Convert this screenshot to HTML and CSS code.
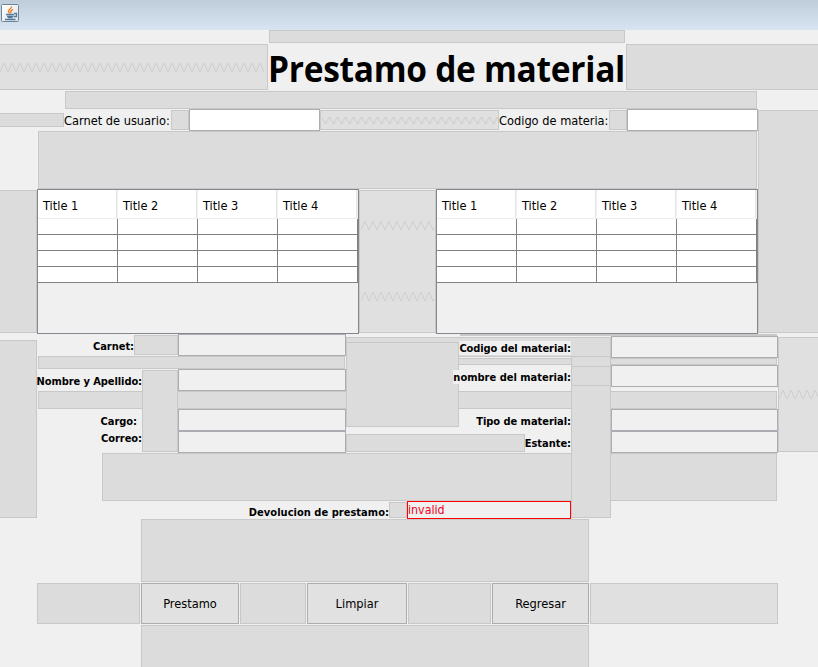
FILE: index.html
```html
<!DOCTYPE html>
<html lang="es">
<head>
<meta charset="utf-8">
<title>Prestamo de material</title>
<link rel="stylesheet" href="styles.css">
</head>
<body>
<div class="window">
  <header class="titlebar">
    <svg class="java" width="18" height="18" viewBox="0 0 18 18">
      <defs>
        <linearGradient id="tile" x1="0" y1="0" x2="1" y2="1"><stop offset="0" stop-color="#fff"/><stop offset="1" stop-color="#dce3ea"/></linearGradient>
        <pattern id="zig" width="8" height="9" patternUnits="userSpaceOnUse"><path d="M0 9L4 0L8 9" fill="none" stroke="#cdcdcd" stroke-width="1"/></pattern>
        <pattern id="zig-low" x="-4.5" width="8" height="7" patternUnits="userSpaceOnUse"><path d="M0 7L4 0L8 7" fill="none" stroke="#cacaca" stroke-width="1"/></pattern>
      </defs>
      <rect x=".5" y=".5" width="17" height="17" rx="1" fill="url(#tile)" stroke="#6c8398"/>
      <path d="M10.500 2.500C11 4.500 7 5.500 7.500 7.500C7.700 8.500 9 8.500 9 9.500M12 5.500C9.500 6.500 9.500 7.500 10.500 8.500" fill="none" stroke="#ef8020" stroke-width="1.500"/>
      <path d="M5 10.500H13M6 12.500H12.500M7 13.500H11.500M13 9.500H15.500V12.500H13M4 15.500H14.500" fill="none" stroke="#52789b" stroke-width="1.300"/>
    </svg>
  </header>

  <div class="gap gap-top"></div>
  <div class="heading">
    <div class="gap flex heading-left"><svg class="zig" width="264" height="9"><rect width="264" height="9" fill="url(#zig)"/></svg></div>
    <h1><span>Prestamo de material</span></h1>
    <div class="gap heading-right"></div>
  </div>

  <div class="upper">
    <div class="upper-main">
      <div class="gap gap-heading"></div>
      <div class="search">
        <div class="gap search-lead"></div>
        <label class="label-user">Carnet de usuario:</label>
        <div class="gap search-gap"></div>
        <div class="field search-field"></div>
        <div class="gap flex search-mid"><svg class="zig" width="176" height="7"><rect width="176" height="7" fill="url(#zig-low)"/></svg></div>
        <label class="label-code">Codigo de materia:</label>
        <div class="gap search-gap"></div>
        <div class="field search-field"></div>
      </div>
      <div class="gap gap-search"></div>
      <div class="tables">
        <div class="gap tables-lead"></div>
        <div class="scroll">
          <table>
            <thead><tr><th>Title 1</th><th>Title 2</th><th>Title 3</th><th>Title 4</th></tr></thead>
            <tbody>
              <tr><td></td><td></td><td></td><td></td></tr>
              <tr><td></td><td></td><td></td><td></td></tr>
              <tr><td></td><td></td><td></td><td></td></tr>
              <tr><td></td><td></td><td></td><td></td></tr>
            </tbody>
          </table>
        </div>
        <div class="gap flex tables-mid">
          <svg class="zig" width="73" height="9"><rect width="73" height="9" fill="url(#zig)"/></svg>
          <svg class="zig" width="73" height="9"><rect width="73" height="9" fill="url(#zig)"/></svg>
        </div>
        <div class="scroll">
          <table>
            <thead><tr><th>Title 1</th><th>Title 2</th><th>Title 3</th><th>Title 4</th></tr></thead>
            <tbody>
              <tr><td></td><td></td><td></td><td></td></tr>
              <tr><td></td><td></td><td></td><td></td></tr>
              <tr><td></td><td></td><td></td><td></td></tr>
              <tr><td></td><td></td><td></td><td></td></tr>
            </tbody>
          </table>
        </div>
      </div>
    </div>
    <div class="gap upper-side"></div>
  </div>

  <div class="form">
    <div class="gap g-left"></div>
    <div class="gap g-row2"></div>
    <div class="gap g-row3"></div>
    <div class="gap g-bottom"></div>
    <div class="gap g-thin"></div>
    <div class="g-line"></div>
    <div class="gap g-carnet"></div>
    <div class="gap g-labels"></div>
    <div class="gap g-code"></div>
    <div class="gap g-center"></div>
    <div class="gap g-shelf"></div>
    <div class="gap g-column"></div>
    <div class="gap g-column-mid"></div>
    <div class="gap flex g-right"><svg class="zig" width="40" height="9"><rect width="40" height="9" fill="url(#zig)"/></svg></div>
    <div class="gap g-return"></div>

    <label class="l-carnet">Carnet:</label>
    <label class="l-name">Nombre y Apellido:</label>
    <label class="l-cargo">Cargo:</label>
    <label class="l-mail">Correo:</label>
    <label class="l-code">Codigo del material:</label>
    <label class="l-matname">nombre del material:</label>
    <label class="l-type">Tipo de material:</label>
    <label class="l-shelf">Estante:</label>
    <label class="l-return">Devolucion de prestamo:</label>

    <div class="field f-carnet"></div>
    <div class="field f-name"></div>
    <div class="field f-cargo"></div>
    <div class="field f-mail"></div>
    <div class="field f-code"></div>
    <div class="field f-matname"></div>
    <div class="field f-type"></div>
    <div class="field f-shelf"></div>
    <div class="invalid">invalid</div>
  </div>

  <div class="gap actions-gap"></div>
  <div class="actions">
    <div class="gap"></div>
    <button><span>Prestamo</span></button>
    <div class="gap"></div>
    <button><span>Limpiar</span></button>
    <div class="gap"></div>
    <button><span>Regresar</span></button>
    <div class="gap flex"></div>
  </div>
  <div class="gap actions-gap last"></div>
</div>
</body>
</html>
```
FILE: styles.css
```css
* { box-sizing: border-box; }
body {
  margin: 0;
  background: #f0f0f0;
  color: #000;
  font: 12.7px/14px "DejaVu Sans Condensed", "DejaVu Sans", sans-serif;
}
.window { width: 818px; height: 667px; overflow: hidden; }
.titlebar {
  height: 30px;
  padding: 4px 1px;
  background: linear-gradient(#bfcddb, #d7e5f2);
}
svg { display: block; }
.gap { border: 1px solid #c8c8c8; background: #dcdcdc; }
.gap.flex { background: #e0e0e0; }
.field { border: 1px solid #abadb3; background: #f0f0f0; height: 22px; }
label { white-space: nowrap; }

/* heading */
.gap-top { width: 356px; height: 13px; margin-left: 269px; }
.heading { display: flex; height: 46px; margin: 1px 0; }
.heading-left { width: 268px; border-left: 0; padding-top: 18px; }
.heading-right { flex: 1; border-right: 0; }
h1 {
  width: 358px;
  margin: 0;
  font: 700 36px/46px "Open Sans", sans-serif;
  letter-spacing: -.3px;
  white-space: nowrap;
  padding-top: 2px;
}
h1 span { display: inline-block; transform: scaleX(.93); transform-origin: 0 50%; }

/* search row and tables */
.upper { display: flex; height: 243px; }
.upper-main { width: 758px; }
.upper-side { flex: 1; margin: 19px 0 1px; border-right: 0; }
.gap-heading { height: 18px; margin: 0 1px 0 65px; }
.search { display: flex; align-items: center; height: 22px; }
.search label { padding-top: 1px; }
.search-lead { width: 64px; height: 14px; border-left: 0; }
.label-user { width: 107px; }
.label-code { width: 110px; }
.search-gap { width: 18px; height: 20px; }
.search-field { width: 131px; background: #fff; }
.search-mid { width: 179px; height: 20px; padding: 6px 0 0 1px; }
.gap-search { height: 58px; margin: 0 1px 0 38px; }
.tables { display: flex; height: 145px; }
.tables-lead { width: 37px; margin: 1px 0; border-left: 0; }
.tables-mid {
  width: 77px;
  margin: 1px 0;
  padding: 30px 1px 31px;
  display: flex;
  flex-direction: column;
  justify-content: space-between;
}
.scroll { width: 322px; border: 1px solid #828790; }
table { width: 320px; border-collapse: separate; border-spacing: 0; table-layout: fixed; background: #fff; }
th {
  height: 29px;
  padding: 3px 0 0 5px;
  border-right: 1px solid #f0f0f0;
  border-bottom: 1px solid #ededed;
  box-shadow: inset -1px 0 #e5e5e5;
  text-align: left;
  font-weight: 400;
}
td { height: 16px; padding: 0; border: solid #808080; border-width: 0 1px 1px 0; }

/* loan details: spacers run beneath the labels and fields */
.form {
  display: grid;
  height: 185px;
  grid-template-columns:
    [c0] 37px [c37] 1px [c38] 64px [c102] 32px [c134] 8px [c142] 36px [c178]
    167px [c345] 1px [c346] 43px [c389] 18px [c407] 46px [c453] 6px [c459]
    66px [c525] 46px [c571] 40px [c611] 166px [c777] 1px [c778] 40px [end];
  grid-template-rows:
    [r0] 1px [r1] 1px [r2] 1px [r3] 3px [r6] 1px [r7] 1px [r8] 13px [r21]
    1px [r22] 1px [r23] 1px [r24] 7px [r31] 1px [r32] 3px [r35] 1px [r36]
    16px [r52] 5px [r57] 18px [r75] 18px [r93] 4px [r97] 3px [r100] 18px [r118]
    1px [r119] 48px [r167] 1px [r168] 16px [r184] 1px [r185];
  font-size: 11px;
  font-weight: 700;
}
.form label {
  justify-self: end;
  height: 14px;
  background: #f0f0f0;
  line-height: 16px;
  letter-spacing: -.04px;
}
.g-left { grid-area: r6 / c0 / r184 / c37; border-left: 0; }
.g-row2 { grid-area: r22 / c38 / r35 / c345; }
.g-row3 { grid-area: r57 / c38 / r75 / c777; }
.g-bottom { grid-area: r119 / c102 / r167 / c777; }
.g-thin { grid-area: r24 / c453 / r31 / c777; }
.g-line { grid-area: r0 / c459 / r2 / c777; margin-left: 1px; background: #c8c8c8; }
.g-carnet { grid-area: r1 / c134 / r21 / c178; }
.g-labels { grid-area: r36 / c142 / r118 / c178; }
.g-code { grid-area: r3 / c346 / r23 / c611; }
.g-center { grid-area: r8 / c346 / r93 / c459; }
.g-shelf { grid-area: r100 / c346 / r118 / c525; }
.g-column { grid-area: r22 / c571 / r184 / c611; }
.g-column-mid { grid-area: r32 / c571 / r52 / c611; }
.g-right { grid-area: r3 / c778 / r118 / end; border-right: 0; padding-top: 52px; }
.g-return { grid-area: r168 / c389 / r184 / c407; }
.l-carnet { grid-area: r1 / c37 / r21 / c134; margin-top: 4px; }
.form .l-name { grid-area: r36 / c37 / r57 / c142; margin-top: 4px; letter-spacing: -.08px; }
.l-cargo { grid-area: r75 / c37 / r97 / c142; margin: 5px 5px 0 0; }
.l-mail { grid-area: r97 / c37 / r118 / c142; }
.form .l-code { grid-area: r7 / c459 / r21 / c571; letter-spacing: -.08px; }
.form .l-matname { grid-area: r36 / c453 / r52 / c571; letter-spacing: 0; }
.l-type { grid-area: r75 / c459 / r93 / c571; margin-top: 5px; }
.l-shelf { grid-area: r100 / c525 / r118 / c571; margin-top: 2px; }
.form .l-return { grid-area: r168 / c178 / r185 / c389; margin-top: 3px; letter-spacing: .03px; }
.f-carnet { grid-area: r0 / c178 / r22 / c346; }
.f-name { grid-area: r35 / c178 / r57 / c346; }
.f-cargo { grid-area: r75 / c178 / r97 / c346; }
.f-mail { grid-area: r97 / c178 / r119 / c346; }
.f-code { grid-area: r2 / c611 / r24 / c778; }
.f-matname { grid-area: r31 / c611 / r52 / c778; }
.f-type { grid-area: r75 / c611 / r97 / c778; }
.f-shelf { grid-area: r97 / c611 / r119 / c778; }
.invalid {
  grid-area: r167 / c407 / r185 / c571;
  border: 1px solid #f00;
  background: #f0f0f0;
  color: #f00020;
  font-size: 12.3px;
  font-weight: 400;
  line-height: 17px;
}

/* buttons */
.actions-gap { width: 448px; height: 63px; margin-left: 141px; }
.actions-gap.last { border-bottom: 0; }
.actions {
  display: grid;
  grid-template-columns: 103px 98px 66px 100px 83px 97px 188px;
  gap: 1px;
  height: 41px;
  margin: 1px 0 1px 37px;
}
button {
  border: 1px solid #adadad;
  background: #e1e1e1;
  padding: 0;
  font: inherit;
  color: inherit;
}
```
